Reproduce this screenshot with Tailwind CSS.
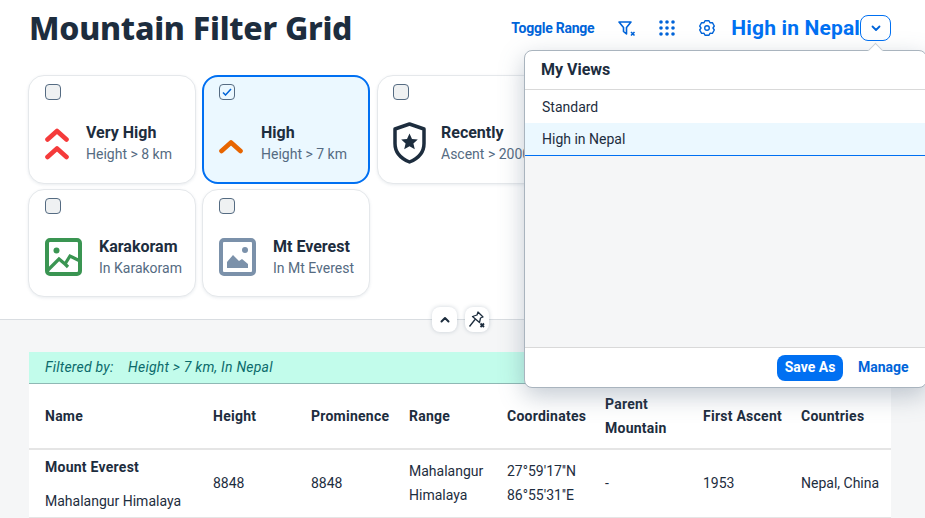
<!DOCTYPE html>
<html>
<head>
  <meta charset="UTF-8">
  <title>Mountain Filter Grid</title>
  <script src="https://cdn.jsdelivr.net/npm/@tailwindcss/browser@4"></script>
</head>
<body class="h-[518px] w-[925px] overflow-hidden relative bg-[#f5f6f7] font-['Roboto',sans-serif] text-[#1d2d3e]">

  <!-- header -->
  <section class="h-[320px] bg-white border-b border-[#d9dde1]">
    <div class="h-[56px] pl-[29px] pr-[34px] flex items-center">
      <h1 class="font-['Noto_Sans',sans-serif] text-[32px] font-extrabold leading-none tracking-[-0.25px]">Mountain Filter Grid</h1>
      <div class="ml-auto flex items-center text-[#0064d9]">
        <span class="text-[14px] font-bold tracking-[-0.25px] mr-[24px]">Toggle Range</span>
        <svg class="w-[18px] h-[18px] mr-[23px]" viewBox="0 0 18 18" fill="none" stroke="currentColor" stroke-width="1.600" stroke-linejoin="round"><path d="M1 3h12L8.500 8.500V15L5.500 12.500V8.500Z"/><path d="M13 13l3.500 3.500M16.500 13 13 16.500"/></svg>
        <svg class="w-[16px] h-[16px] mr-[24px]" viewBox="0 0 16 16" fill="currentColor"><circle cx="2" cy="2" r="1.800"/><circle cx="8" cy="2" r="1.800"/><circle cx="14" cy="2" r="1.800"/><circle cx="2" cy="8" r="1.800"/><circle cx="8" cy="8" r="1.800"/><circle cx="14" cy="8" r="1.800"/><circle cx="2" cy="14" r="1.800"/><circle cx="8" cy="14" r="1.800"/><circle cx="14" cy="14" r="1.800"/></svg>
        <svg class="w-[16px] h-[16px] mr-[16px]" viewBox="0 0 16 16" fill="none" stroke="currentColor" stroke-width="1.400" stroke-linejoin="round"><path d="M6 .7h4l1 2.100 2.400-.2 1.900 3.400L14 8l1.300 2-1.900 3.400-2.400-.2-1 2.100H6l-1-2.100-2.400.2L.7 10 2 8 .7 6l1.900-3.400 2.400.2z"/><circle cx="8" cy="8" r="2.300"/></svg>
        <span class="text-[21px] font-bold tracking-[0.15px] text-[#0070f2] leading-none">High in Nepal</span>
        <button class="w-[31px] h-[26px] flex items-center justify-center border border-[#0070f2] rounded-lg">
          <svg class="w-[10px] h-[7px]" viewBox="0 0 10 7" fill="none" stroke="#0064d9" stroke-width="1.800" stroke-linecap="round" stroke-linejoin="round"><path d="M1.500 1.500 5 5l3.500-3.500"/></svg>
        </button>
      </div>
    </div>

    <div class="mt-[19px] ml-[28px] grid grid-cols-[168px_168px_168px] gap-x-[6px] gap-y-[5px]">
      <!-- very high -->
      <div class="h-[109px] rounded-2xl border border-[#e5e8eb] shadow-[0_1px_3px_rgba(85,107,130,0.12)] bg-white pl-[16px] pt-[8px]">
        <div class="w-[16px] h-[16px] rounded-[4px] border border-[#556b82] bg-[#eff1f2]"></div>
        <div class="mt-[20px] flex items-center h-[46px]">
          <svg class="w-[24px] h-[36px] mr-[17px]" viewBox="0 0 24 36" fill="none" stroke="#f53b3b" stroke-width="4.600" stroke-linecap="round" stroke-linejoin="round"><path d="M2.500 14.500 12 6l9.500 8.500M2.500 32 12 23.500l9.500 8.500"/></svg>
          <div>
            <div class="text-[16px] font-bold leading-[22px]">Very High</div>
            <div class="text-[14px] leading-[20px] text-[#556b82]">Height &gt; 8 km</div>
          </div>
        </div>
      </div>
      <!-- high -->
      <div class="h-[109px] rounded-2xl border-2 border-[#0070f2] bg-[#ebf8ff] pl-[15px] pt-[7px]">
        <div class="w-[16px] h-[16px] rounded-[4px] border border-[#556b82] bg-[#ebf8ff] flex items-center justify-center">
          <svg class="w-[10px] h-[8px]" viewBox="0 0 10 8" fill="none" stroke="#0064d9" stroke-width="1.500"><path d="M1 4.500 3.500 7 9 1"/></svg>
        </div>
        <div class="mt-[20px] flex items-center h-[46px]">
          <svg class="w-[24px] h-[36px] mr-[18px]" viewBox="0 0 24 36" fill="none" stroke="#e76500" stroke-width="4.600" stroke-linecap="round" stroke-linejoin="round"><path d="M2.500 26 12 17.500l9.500 8.500"/></svg>
          <div>
            <div class="text-[16px] font-bold leading-[22px]">High</div>
            <div class="text-[14px] leading-[20px] text-[#556b82]">Height &gt; 7 km</div>
          </div>
        </div>
      </div>
      <!-- recently -->
      <div class="ml-px h-[109px] rounded-2xl border border-[#e5e8eb] shadow-[0_1px_3px_rgba(85,107,130,0.12)] bg-white pl-[15px] pt-[8px]">
        <div class="w-[16px] h-[16px] rounded-[4px] border border-[#556b82] bg-[#eff1f2]"></div>
        <div class="mt-[20px] flex items-center h-[46px]">
          <svg class="w-[33px] h-[42px] mr-[15px]" viewBox="0 0 33 42" fill="none"><path d="M16.500 2 31 7v14.500C31 31 24 37 16.500 40 9 37 2 31 2 21.500V7Z" stroke="#1d2d3e" stroke-width="3.500" stroke-linejoin="round"/><path d="m16.500 11.500 2.500 5.500 5.800.5-4.400 3.900 1.400 5.800-5.300-3-5.300 3 1.400-5.800-4.400-3.900 5.800-.5Z" fill="#1d2d3e"/></svg>
          <div class="whitespace-nowrap">
            <div class="text-[16px] font-bold leading-[22px]">Recently</div>
            <div class="text-[14px] leading-[20px] text-[#556b82]">Ascent &gt; 2000</div>
          </div>
        </div>
      </div>
      <!-- karakoram -->
      <div class="h-[108px] rounded-2xl border border-[#e5e8eb] shadow-[0_1px_3px_rgba(85,107,130,0.12)] bg-white pl-[16px] pt-[8px]">
        <div class="w-[16px] h-[16px] rounded-[4px] border border-[#556b82] bg-[#eff1f2]"></div>
        <div class="mt-[20px] flex items-center h-[46px]">
          <svg class="w-[37px] h-[38px] mr-[17px]" viewBox="0 0 37 38" fill="none"><rect x="2" y="2" width="33" height="34" rx="3" stroke="#3a9552" stroke-width="4"/><circle cx="11.500" cy="12.500" r="3" fill="#3a9552"/><path d="M2 33 14 21l6 5 5-8 10 5M20 26l3 3" stroke="#3a9552" stroke-width="3.200"/></svg>
          <div>
            <div class="text-[16px] font-bold leading-[22px]">Karakoram</div>
            <div class="text-[14px] leading-[20px] text-[#556b82]">In Karakoram</div>
          </div>
        </div>
      </div>
      <!-- mt everest -->
      <div class="h-[108px] rounded-2xl border border-[#e5e8eb] shadow-[0_1px_3px_rgba(85,107,130,0.12)] bg-white pl-[16px] pt-[8px]">
        <div class="w-[16px] h-[16px] rounded-[4px] border border-[#556b82] bg-[#eff1f2]"></div>
        <div class="mt-[20px] flex items-center h-[46px]">
          <svg class="w-[37px] h-[38px] mr-[17px]" viewBox="0 0 37 38" fill="none"><rect x="2" y="2" width="33" height="34" rx="3" stroke="#7b91aa" stroke-width="4"/><circle cx="26" cy="12" r="3" fill="#7b91aa"/><path d="M8 30V24l6-7 6 6 3-2 6 5v4Z" fill="#7b91aa"/></svg>
          <div>
            <div class="text-[16px] font-bold leading-[22px]">Mt Everest</div>
            <div class="text-[14px] leading-[20px] text-[#556b82]">In Mt Everest</div>
          </div>
        </div>
      </div>
    </div>
  </section>

  <!-- collapse and pin -->
  <button class="absolute left-[432px] top-[307px] w-[25px] h-[25px] rounded-lg bg-white shadow-[0_0_4px_rgba(85,107,130,0.3)] flex items-center justify-center">
    <svg class="w-[10px] h-[7px]" viewBox="0 0 10 7" fill="none" stroke="#1d2d3e" stroke-width="2" stroke-linecap="round" stroke-linejoin="round"><path d="M1.500 5.500 5 2l3.500 3.500"/></svg>
  </button>
  <button class="absolute left-[465px] top-[307px] w-[24px] h-[25px] rounded-lg bg-white shadow-[0_0_4px_rgba(85,107,130,0.3)] flex items-center justify-center">
    <svg class="w-[18px] h-[18px]" viewBox="0 0 18 18" fill="none" stroke="#1d2d3e" stroke-width="1.300" stroke-linejoin="round"><path d="M10 1l5 5-2.500 1-1 4.500L4.500 5.500 9 4ZM7 8.500l-5.500 7"/><path d="M12.500 12.500l3.500 3.500M16 12.500 12.500 16" stroke-width="1.800"/></svg>
  </button>

  <!-- table -->
  <div class="mt-[32px] mx-[29px] mr-[34px] bg-white">
    <div class="h-[32px] bg-[#c2fceb] border-b border-[#8fb8b4] pl-[16px] flex items-center text-[14px] italic tracking-[0.22px] text-[#0c6b6b] whitespace-pre">Filtered by:    Height &gt; 7 km, In Nepal</div>
    <div class="h-[66px] grid grid-cols-[168px_repeat(6,98px)_106px] items-center pl-[16px] border-b-2 border-[#e5e5e5] text-[14px] font-bold tracking-[0.25px] leading-[24px]">
      <div>Name</div><div>Height</div><div>Prominence</div><div>Range</div><div>Coordinates</div><div>Parent<br>Mountain</div><div>First Ascent</div><div>Countries</div>
    </div>
    <div class="h-[68px] pb-[2px] grid grid-cols-[168px_repeat(6,98px)_106px] items-center pl-[16px] border-b border-[#e5e5e5] text-[14px] leading-[24px]">
      <div class="pt-[4px]"><div class="font-bold tracking-[0.25px] leading-[17px] mb-[17px]">Mount Everest</div><div class="leading-[17px]">Mahalangur Himalaya</div></div>
      <div>8848</div><div>8848</div><div>Mahalangur<br>Himalaya</div><div>27°59'17''N<br>86°55'31''E</div><div>-</div><div>1953</div><div>Nepal, China</div>
    </div>
  </div>

  <!-- my views popover -->
  <div class="absolute left-[524px] top-[50px] w-[403px] h-[338px] bg-white rounded-lg border border-[#a9b4be] shadow-[0_8px_24px_rgba(85,107,130,0.35)] flex flex-col">
    <div class="absolute left-[345px] top-[-6px] w-[11px] h-[11px] rotate-45 bg-white border-l border-t border-[#c9d0d6]"></div>
    <div class="h-[39px] pl-[16px] flex items-center border-b border-[#d9d9d9] text-[16px] font-bold">My Views</div>
    <div class="h-[33px] pl-[17px] pt-[2px] flex items-center text-[14px]">Standard</div>
    <div class="h-[33px] pl-[17px] pt-[1px] flex items-center text-[14px] bg-[#ebf8ff] border-b border-[#0070f2]">High in Nepal</div>
    <div class="flex-1 bg-[#f5f6f7]"></div>
    <div class="h-[40px] border-t border-[#d9d9d9] flex items-center pl-[252px]">
      <button class="w-[66px] h-[26px] rounded-lg bg-[#0070f2] text-white text-[14px] font-bold">Save As</button>
      <span class="ml-[15px] text-[14px] font-bold text-[#0064d9]">Manage</span>
    </div>
  </div>
</body>
</html>
